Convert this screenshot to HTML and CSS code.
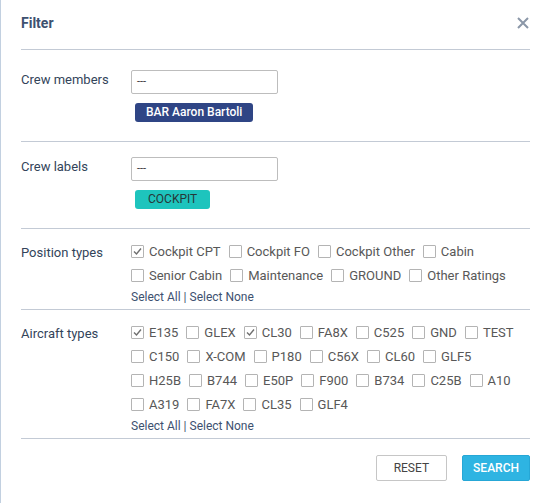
FILE: index.html
```html
<!DOCTYPE html>
<html>
<head>
<meta charset="utf-8">
<link rel="stylesheet" href="styles.css">
</head>
<body>
<div class="modal">
  <header class="modal-header">
    <h2 class="title">Filter</h2>
    <span class="close" aria-label="Close">
      <svg width="12" height="12" viewBox="0 0 12 12"><path d="M1 1L11 11M11 1L1 11" stroke="#8b97a8" stroke-width="2" fill="none"/></svg>
    </span>
  </header>

  <section class="section section-input">
    <div class="label">Crew members</div>
    <div class="field">
      <div class="text-input">---</div>
      <div class="chips"><span class="chip chip-blue">BAR Aaron Bartoli</span></div>
    </div>
  </section>

  <section class="section section-input second">
    <div class="label">Crew labels</div>
    <div class="field">
      <div class="text-input">---</div>
      <div class="chips"><span class="chip chip-teal">COCKPIT</span></div>
    </div>
  </section>

  <section class="section section-check">
    <div class="label label-check">Position types</div>
    <div class="field">
      <div class="checks">
        <label class="cb"><span class="box checked"><svg width="13" height="13" viewBox="0 0 13 13"><path d="M3 6.5L5.5 9L10 3.5" stroke="#6f6f6f" stroke-width="1.4" fill="none"/></svg></span>Cockpit CPT</label>
        <label class="cb"><span class="box"></span>Cockpit FO</label>
        <label class="cb"><span class="box"></span>Cockpit Other</label>
        <label class="cb"><span class="box"></span>Cabin</label>
        <label class="cb"><span class="box"></span>Senior Cabin</label>
        <label class="cb"><span class="box"></span>Maintenance</label>
        <label class="cb"><span class="box"></span>GROUND</label>
        <label class="cb"><span class="box"></span>Other Ratings</label>
      </div>
      <div class="select-links"><a>Select All</a> | <a>Select None</a></div>
    </div>
  </section>

  <section class="section section-check">
    <div class="label label-check">Aircraft types</div>
    <div class="field">
      <div class="checks">
        <label class="cb"><span class="box checked"><svg width="13" height="13" viewBox="0 0 13 13"><path d="M3 6.5L5.5 9L10 3.5" stroke="#6f6f6f" stroke-width="1.4" fill="none"/></svg></span>E135</label>
        <label class="cb"><span class="box"></span>GLEX</label>
        <label class="cb"><span class="box checked"><svg width="13" height="13" viewBox="0 0 13 13"><path d="M3 6.5L5.5 9L10 3.5" stroke="#6f6f6f" stroke-width="1.4" fill="none"/></svg></span>CL30</label>
        <label class="cb"><span class="box"></span>FA8X</label>
        <label class="cb"><span class="box"></span>C525</label>
        <label class="cb"><span class="box"></span>GND</label>
        <label class="cb"><span class="box"></span>TEST</label>
        <label class="cb"><span class="box"></span>C150</label>
        <label class="cb"><span class="box"></span>X-COM</label>
        <label class="cb"><span class="box"></span>P180</label>
        <label class="cb"><span class="box"></span>C56X</label>
        <label class="cb"><span class="box"></span>CL60</label>
        <label class="cb"><span class="box"></span>GLF5</label>
        <label class="cb"><span class="box"></span>H25B</label>
        <label class="cb"><span class="box"></span>B744</label>
        <label class="cb"><span class="box"></span>E50P</label>
        <label class="cb"><span class="box"></span>F900</label>
        <label class="cb"><span class="box"></span>B734</label>
        <label class="cb"><span class="box"></span>C25B</label>
        <label class="cb"><span class="box"></span>A10</label>
        <label class="cb"><span class="box"></span>A319</label>
        <label class="cb"><span class="box"></span>FA7X</label>
        <label class="cb"><span class="box"></span>CL35</label>
        <label class="cb"><span class="box"></span>GLF4</label>
      </div>
      <div class="select-links"><a>Select All</a> | <a>Select None</a></div>
    </div>
  </section>

  <footer class="footer">
    <button class="btn">RESET</button>
    <button class="btn btn-primary">SEARCH</button>
  </footer>
</div>
</body>
</html>
```

FILE: styles.css
```css
* { box-sizing: border-box; }

html, body {
  margin: 0;
  padding: 0;
  background: #ffffff;
}

body {
  font-family: Roboto, "Liberation Sans", Arial, sans-serif;
  font-size: 13px;
  color: #33445a;
  border-left: 1px solid #c2d0e0;
  min-height: 503px;
}

.modal {
  padding: 0 20px 0 20px;
}

.modal-header {
  display: flex;
  align-items: center;
  justify-content: space-between;
  height: 50px;
  border-bottom: 1px solid #c3cad5;
  padding-bottom: 4px;
}

.title {
  margin: 0;
  font-size: 14px;
  font-weight: 700;
  color: #3d5170;
}

.close {
  display: flex;
  width: 14px;
  justify-content: flex-end;
  margin-right: 1px;
}

.section {
  display: grid;
  grid-template-columns: 110px 1fr;
  border-bottom: 1px solid #c3cad5;
}

.section-input {
  padding: 20px 0 19px 0;
}

.section-input.second {
  padding-top: 15px;
}

.label {
  color: #33445a;
  line-height: 20px;
}

.label-check {
  line-height: 24px;
  padding-top: 2px;
}

.text-input {
  width: 147px;
  height: 24px;
  border: 1px solid #bdbdbd;
  border-radius: 2px;
  font-size: 11px;
  color: #333;
  padding: 0 5px;
  line-height: 22px;
}

.chips {
  display: flex;
  margin-top: 9px;
  padding-left: 4px;
}

.chip {
  display: inline-block;
  height: 19px;
  line-height: 19px;
  padding: 0 12px;
  border-radius: 3px;
  font-size: 12px;
}

.chip-blue {
  background: #2f4585;
  color: #ffffff;
  font-weight: 500;
  padding: 0 11px;
}

.chip-teal {
  background: #1ec4bd;
  color: #263838;
  padding: 0 13px;
}

.section-check {
  padding: 10px 0 2px 0;
}

.checks {
  display: flex;
  flex-wrap: wrap;
}

.cb {
  display: inline-flex;
  align-items: center;
  height: 24px;
  margin-right: 8px;
  color: #585858;
  font-size: 13px;
}

.box {
  width: 13px;
  height: 13px;
  border: 1px solid #b4b4b4;
  border-radius: 1px;
  margin-right: 5px;
  display: inline-flex;
  align-items: center;
  justify-content: center;
  background: #fff;
}

.box svg {
  display: block;
  margin: -1px;
}

.select-links {
  font-size: 12px;
  color: #3d5170;
  line-height: 20px;
}

.select-links a {
  color: #3d5170;
}

.footer {
  display: flex;
  justify-content: flex-end;
  gap: 15px;
  padding-top: 16px;
}

.btn {
  height: 26px;
  padding: 0 17px;
  border: 1px solid #c6c6c6;
  border-radius: 2px;
  background: #ffffff;
  font-family: Roboto, "Liberation Sans", Arial, sans-serif;
  font-size: 12px;
  color: #444;
}

.btn-primary {
  background: #2eb4e2;
  border-color: #26a7d6;
  color: #ffffff;
  font-weight: 500;
  padding: 0 10px;
}
```
